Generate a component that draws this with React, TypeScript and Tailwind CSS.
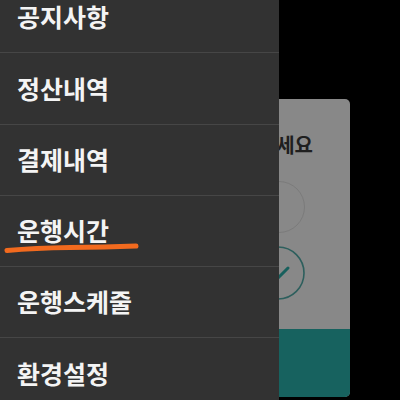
const menu = ["공지사항", "정산내역", "결제내역", "운행시간", "운행스케줄", "환경설정"];

export default function App() {
  return (
    <div
      className="relative h-[400px] w-[400px] overflow-hidden bg-black"
      style={{ fontFamily: '"Noto Sans CJK KR", "Noto Sans", sans-serif' }}
    >
      {/* dimmed dialog behind the drawer */}
      <div className="absolute left-[50px] top-[99px] flex h-[298px] w-[300px] flex-col rounded-[5px] bg-[#888888]">
        <div className="flex justify-end pr-[37px] pt-[32px] text-[20px] font-bold leading-[28px] text-[#1f1f1f]">
          운행 시간을 선택하세요
        </div>
        <div className="mt-[22px] flex justify-end pr-[45px]">
          <div className="h-[52px] w-[52px] rounded-full border-[1.5px] border-[#7b7b7b]" />
        </div>
        <div className="mt-[13px] flex justify-end pr-[45px]">
          <svg width="54" height="54" viewBox="0 0 54 54" fill="none">
            <circle cx="27" cy="27" r="26" stroke="#2d5f5d" strokeWidth="1.6" />
            <path d="M17 26 L25 34 L37 22" stroke="#17605d" strokeWidth="3" strokeLinecap="round" strokeLinejoin="round" />
          </svg>
        </div>
        <div className="mt-auto h-[68px] rounded-b-[5px] bg-[#17625f]" />
      </div>

      {/* side drawer */}
      <div className="absolute left-0 top-0 flex h-full w-[279px] flex-col bg-[#323232]">
        <div className="-mt-[18px] flex flex-col">
          {menu.map((label, i) => (
            <div
              key={label}
              className="relative flex h-[71.25px] shrink-0 items-center border-b border-[#464646] pl-[17px] text-[25px] font-bold text-[#f4f4f4]"
            >
              {label}
              {i === 3 && (
                <svg className="absolute left-0 top-[40px]" width="150" height="20" viewBox="0 0 150 20" fill="none">
                  <path
                    d="M7 14.5 Q35 12 70 11.5 T136 10"
                    stroke="#f26a1e"
                    strokeWidth="5"
                    strokeLinecap="round"
                  />
                </svg>
              )}
            </div>
          ))}
        </div>
      </div>
    </div>
  );
}
